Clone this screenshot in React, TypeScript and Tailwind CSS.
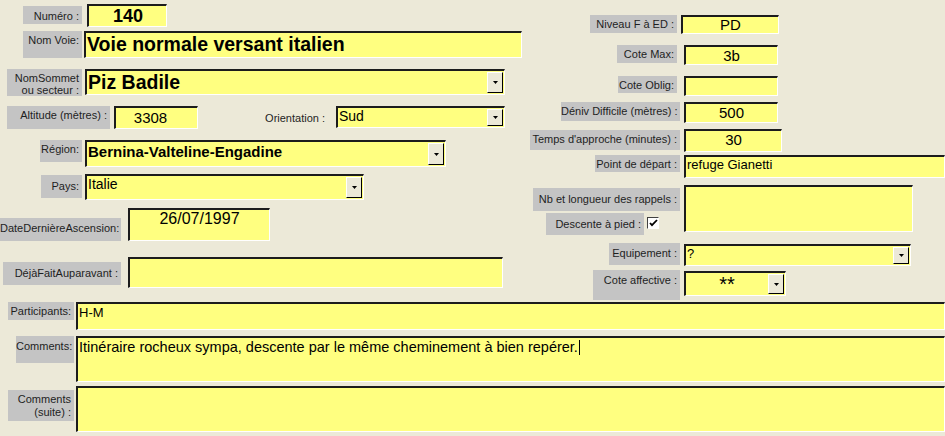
import type { ReactNode } from "react";

// Fiche course — formulaire Access (saisie d'une voie)

function Label(props: { className: string; children: ReactNode }) {
  return (
    <div
      className={`shrink-0 overflow-hidden whitespace-nowrap bg-[#c4c4c4] pr-[3px] pt-[3px] text-right text-[11px] leading-[12px] text-[#1e1e1e] ${props.className}`}
    >
      {props.children}
    </div>
  );
}

function Field(props: { className: string; children?: ReactNode }) {
  return (
    <div
      className={`shrink-0 overflow-hidden whitespace-nowrap border-t-2 border-l-2 border-b border-r border-t-[#1c1c1c] border-l-[#1c1c1c] border-b-white border-r-white bg-[#ffff80] text-black ${props.className}`}
    >
      {props.children}
    </div>
  );
}

function DropButton() {
  return (
    <div className="my-[1px] mr-[1px] flex w-[16px] shrink-0 items-center justify-center border-t border-l border-b border-r border-t-white border-l-white border-b-black border-r-black bg-[#ece9d8]">
      <svg width="5" height="3" viewBox="0 0 5 3">
        <path d="M0 0h5L2.5 3z" fill="#000" />
      </svg>
    </div>
  );
}

function Combo(props: { className: string; textClass: string; children?: ReactNode }) {
  return (
    <Field className={`flex ${props.className}`}>
      <div className={`min-w-0 flex-1 ${props.textClass}`}>{props.children}</div>
      <DropButton />
    </Field>
  );
}

function CheckBox() {
  return (
    <div className="flex h-[12px] w-[12px] shrink-0 items-center justify-center border-t border-l border-b border-r border-t-[#404040] border-l-[#404040] border-b-white border-r-white bg-white">
      <svg width="9" height="8" viewBox="0 0 9 8">
        <path d="M1 4l2 2.2L8 1" stroke="#000" strokeWidth="1.8" fill="none" />
      </svg>
    </div>
  );
}

export default function App() {
  return (
    <div className="h-[436px] w-[945px] overflow-hidden bg-[#ece9d8] font-['Liberation_Sans',Arial,sans-serif]">
      <div className="flex h-[302px]">
        {/* colonne gauche */}
        <div className="flex w-[530px] shrink-0 flex-col">
          <div className="mt-[4px] flex items-start">
            <Label className="mt-[2px] ml-[23px] h-[18px] w-[59px] pt-[4px]">Numéro :</Label>
            <Field className="ml-[5px] h-[23px] w-[80px] pl-[24px] text-[18px] leading-[20px] font-bold">140</Field>
          </div>
          <div className="mt-[4px] flex items-start">
            <Label className="ml-[23px] h-[27px] w-[59px] text-[10px]">Nom Voie:</Label>
            <Field className="ml-[2px] h-[27px] w-[438px] pl-[1px] text-[19.5px] leading-[22px] font-bold">
              Voie normale versant italien
            </Field>
          </div>
          <div className="mt-[11px] flex items-start">
            <Label className="ml-[7px] h-[27px] w-[75px] pt-[2px] text-[10px] leading-[11px]">
              NomSommet
              <br />
              ou secteur :
            </Label>
            <Combo className="ml-[3px] h-[26px] w-[420px]" textClass="pl-[1px] text-[19.5px] leading-[22px] font-bold">
              Piz Badile
            </Combo>
          </div>
          <div className="mt-[10px] flex items-start">
            <Label className="ml-[7px] h-[23px] w-[103px]">Altitude (mètres) :</Label>
            <Field className="ml-[4px] h-[23px] w-[84px] pr-[12px] text-center text-[15px] leading-[19px]">3308</Field>
            <div className="mt-[6px] ml-[66px] w-[61px] shrink-0 whitespace-nowrap text-right text-[11px] leading-[12px] text-[#1e1e1e]">
              Orientation :
            </div>
            <Combo className="ml-[11px] h-[22px] w-[169px]" textClass="pl-[1px] text-[14px] leading-[17px]">
              Sud
            </Combo>
          </div>
          <div className="mt-[11px] flex items-start">
            <Label className="ml-[40px] h-[22px] w-[42px] text-[10px]">Région:</Label>
            <Combo className="ml-[3px] h-[27px] w-[361px]" textClass="pl-[1px] pt-[1px] text-[15px] leading-[18px] font-bold">
              Bernina-Valteline-Engadine
            </Combo>
          </div>
          <div className="mt-[7px] flex items-start">
            <Label className="mt-[1px] ml-[41px] h-[23px] w-[41px] pt-[5px]">Pays:</Label>
            <Combo className="ml-[3px] h-[26px] w-[279px]" textClass="pl-[1px] text-[14px] leading-[17px]">
              Italie
            </Combo>
          </div>
          <div className="mt-[8px] flex items-start">
            <Label className="mt-[10px] h-[23px] w-[121px] pt-[4px]">DateDernièreAscension:</Label>
            <Field className="ml-[7px] h-[33px] w-[142px] text-center text-[16px] leading-[18px]">26/07/1997</Field>
          </div>
          <div className="mt-[16px] flex items-start">
            <Label className="mt-[5px] ml-[3px] h-[23px] w-[118px] pt-[5px]">DéjàFaitAuparavant :</Label>
            <Field className="ml-[7px] h-[31px] w-[375px]" />
          </div>
        </div>

        {/* colonne droite */}
        <div className="flex min-w-0 flex-1 flex-col">
          <div className="mt-[15px] flex items-start">
            <Label className="ml-[60px] h-[18px] w-[87px]">Niveau F à ED :</Label>
            <Field className="ml-[4px] h-[19px] w-[98px] text-center text-[15px] leading-[16px]">PD</Field>
          </div>
          <div className="mt-[11px] flex items-start">
            <Label className="ml-[87px] h-[18px] w-[60px]">Cote Max:</Label>
            <Field className="ml-[7px] h-[20px] w-[94px] text-center text-[15px] leading-[17px]">3b</Field>
          </div>
          <div className="mt-[11px] flex items-start">
            <Label className="ml-[88px] h-[17px] w-[59px]">Cote Oblig:</Label>
            <Field className="ml-[7px] h-[20px] w-[94px]" />
          </div>
          <div className="mt-[6px] flex items-start">
            <Label className="ml-[31px] h-[19px] w-[119px]">Déniv Difficile (mètres) :</Label>
            <Field className="ml-[4px] h-[21px] w-[94px] text-center text-[15px] leading-[17px]">500</Field>
          </div>
          <div className="mt-[6px] flex items-start">
            <Label className="mt-[1px] h-[20px] w-[150px]">Temps d'approche (minutes) :</Label>
            <Field className="ml-[4px] h-[23px] w-[98px] text-center text-[15px] leading-[17px]">30</Field>
          </div>
          <div className="mt-[3px] flex items-start">
            <Label className="ml-[65px] h-[17px] w-[85px] pt-[2px]">Point de départ :</Label>
            <Field className="ml-[4px] h-[23px] flex-1 pl-[1px] text-[13px] leading-[16px]">refuge Gianetti</Field>
          </div>
          <div className="mt-[7px] flex items-start">
            <div className="flex w-[150px] shrink-0 flex-col">
              <Label className="mt-[3px] ml-[3px] h-[23px] w-[147px] pt-[5px]">Nb et longueur des rappels :</Label>
              <div className="mt-[2px] flex items-start">
                <Label className="ml-[16px] h-[22px] w-[98px] pt-[5px]">Descente à pied :</Label>
                <div className="mt-[4px] ml-[3px]">
                  <CheckBox />
                </div>
              </div>
            </div>
            <Field className="ml-[4px] h-[47px] w-[229px]" />
          </div>
          <div className="mt-[9px] flex items-start">
            <Label className="mt-[-1px] ml-[79px] h-[22px] w-[71px] pt-[4px]">Equipement :</Label>
            <Combo className="ml-[4px] h-[22px] w-[227px]" textClass="pl-[1px] text-[13px] leading-[16px]">
              ?
            </Combo>
          </div>
          <div className="mt-[5px] flex items-start">
            <Label className="mt-[-1px] ml-[63px] h-[30px] w-[87px] pt-[4px]">Cote affective :</Label>
            <Combo className="ml-[4px] h-[25px] w-[102px]" textClass="pt-[1px] text-center text-[20px] leading-[20px]">
              **
            </Combo>
          </div>
        </div>
      </div>

      {/* zone commentaires */}
      <div className="flex flex-col">
        <div className="flex items-start">
          <Label className="ml-[8px] h-[18px] w-[66px] pt-[3px] text-[10px]">Participants:</Label>
          <Field className="ml-[2px] h-[28px] flex-1 pl-[1px] pt-[1px] text-[13px] leading-[16px]">H-M</Field>
        </div>
        <div className="mt-[6px] flex items-start">
          <Label className="ml-[16px] h-[27px] w-[58px] pt-[4px] text-[10px]">Comments:</Label>
          <Field className="ml-[2px] h-[46px] flex-1 pl-[1px] pt-[1px] text-[14.5px] leading-[16px]">
            Itinéraire rocheux sympa, descente par le même cheminement à bien repérer.
            <span className="ml-[1px] inline-block h-[15px] w-[1px] bg-black align-[-3px]" />
          </Field>
        </div>
        <div className="mt-[4px] flex items-start">
          <Label className="mt-[4px] ml-[8px] h-[31px] w-[66px] pt-[2px] text-[10px] leading-[13px]">
            Comments
            <br />
            (suite) :
          </Label>
          <Field className="ml-[2px] h-[46px] flex-1" />
        </div>
      </div>
    </div>
  );
}
